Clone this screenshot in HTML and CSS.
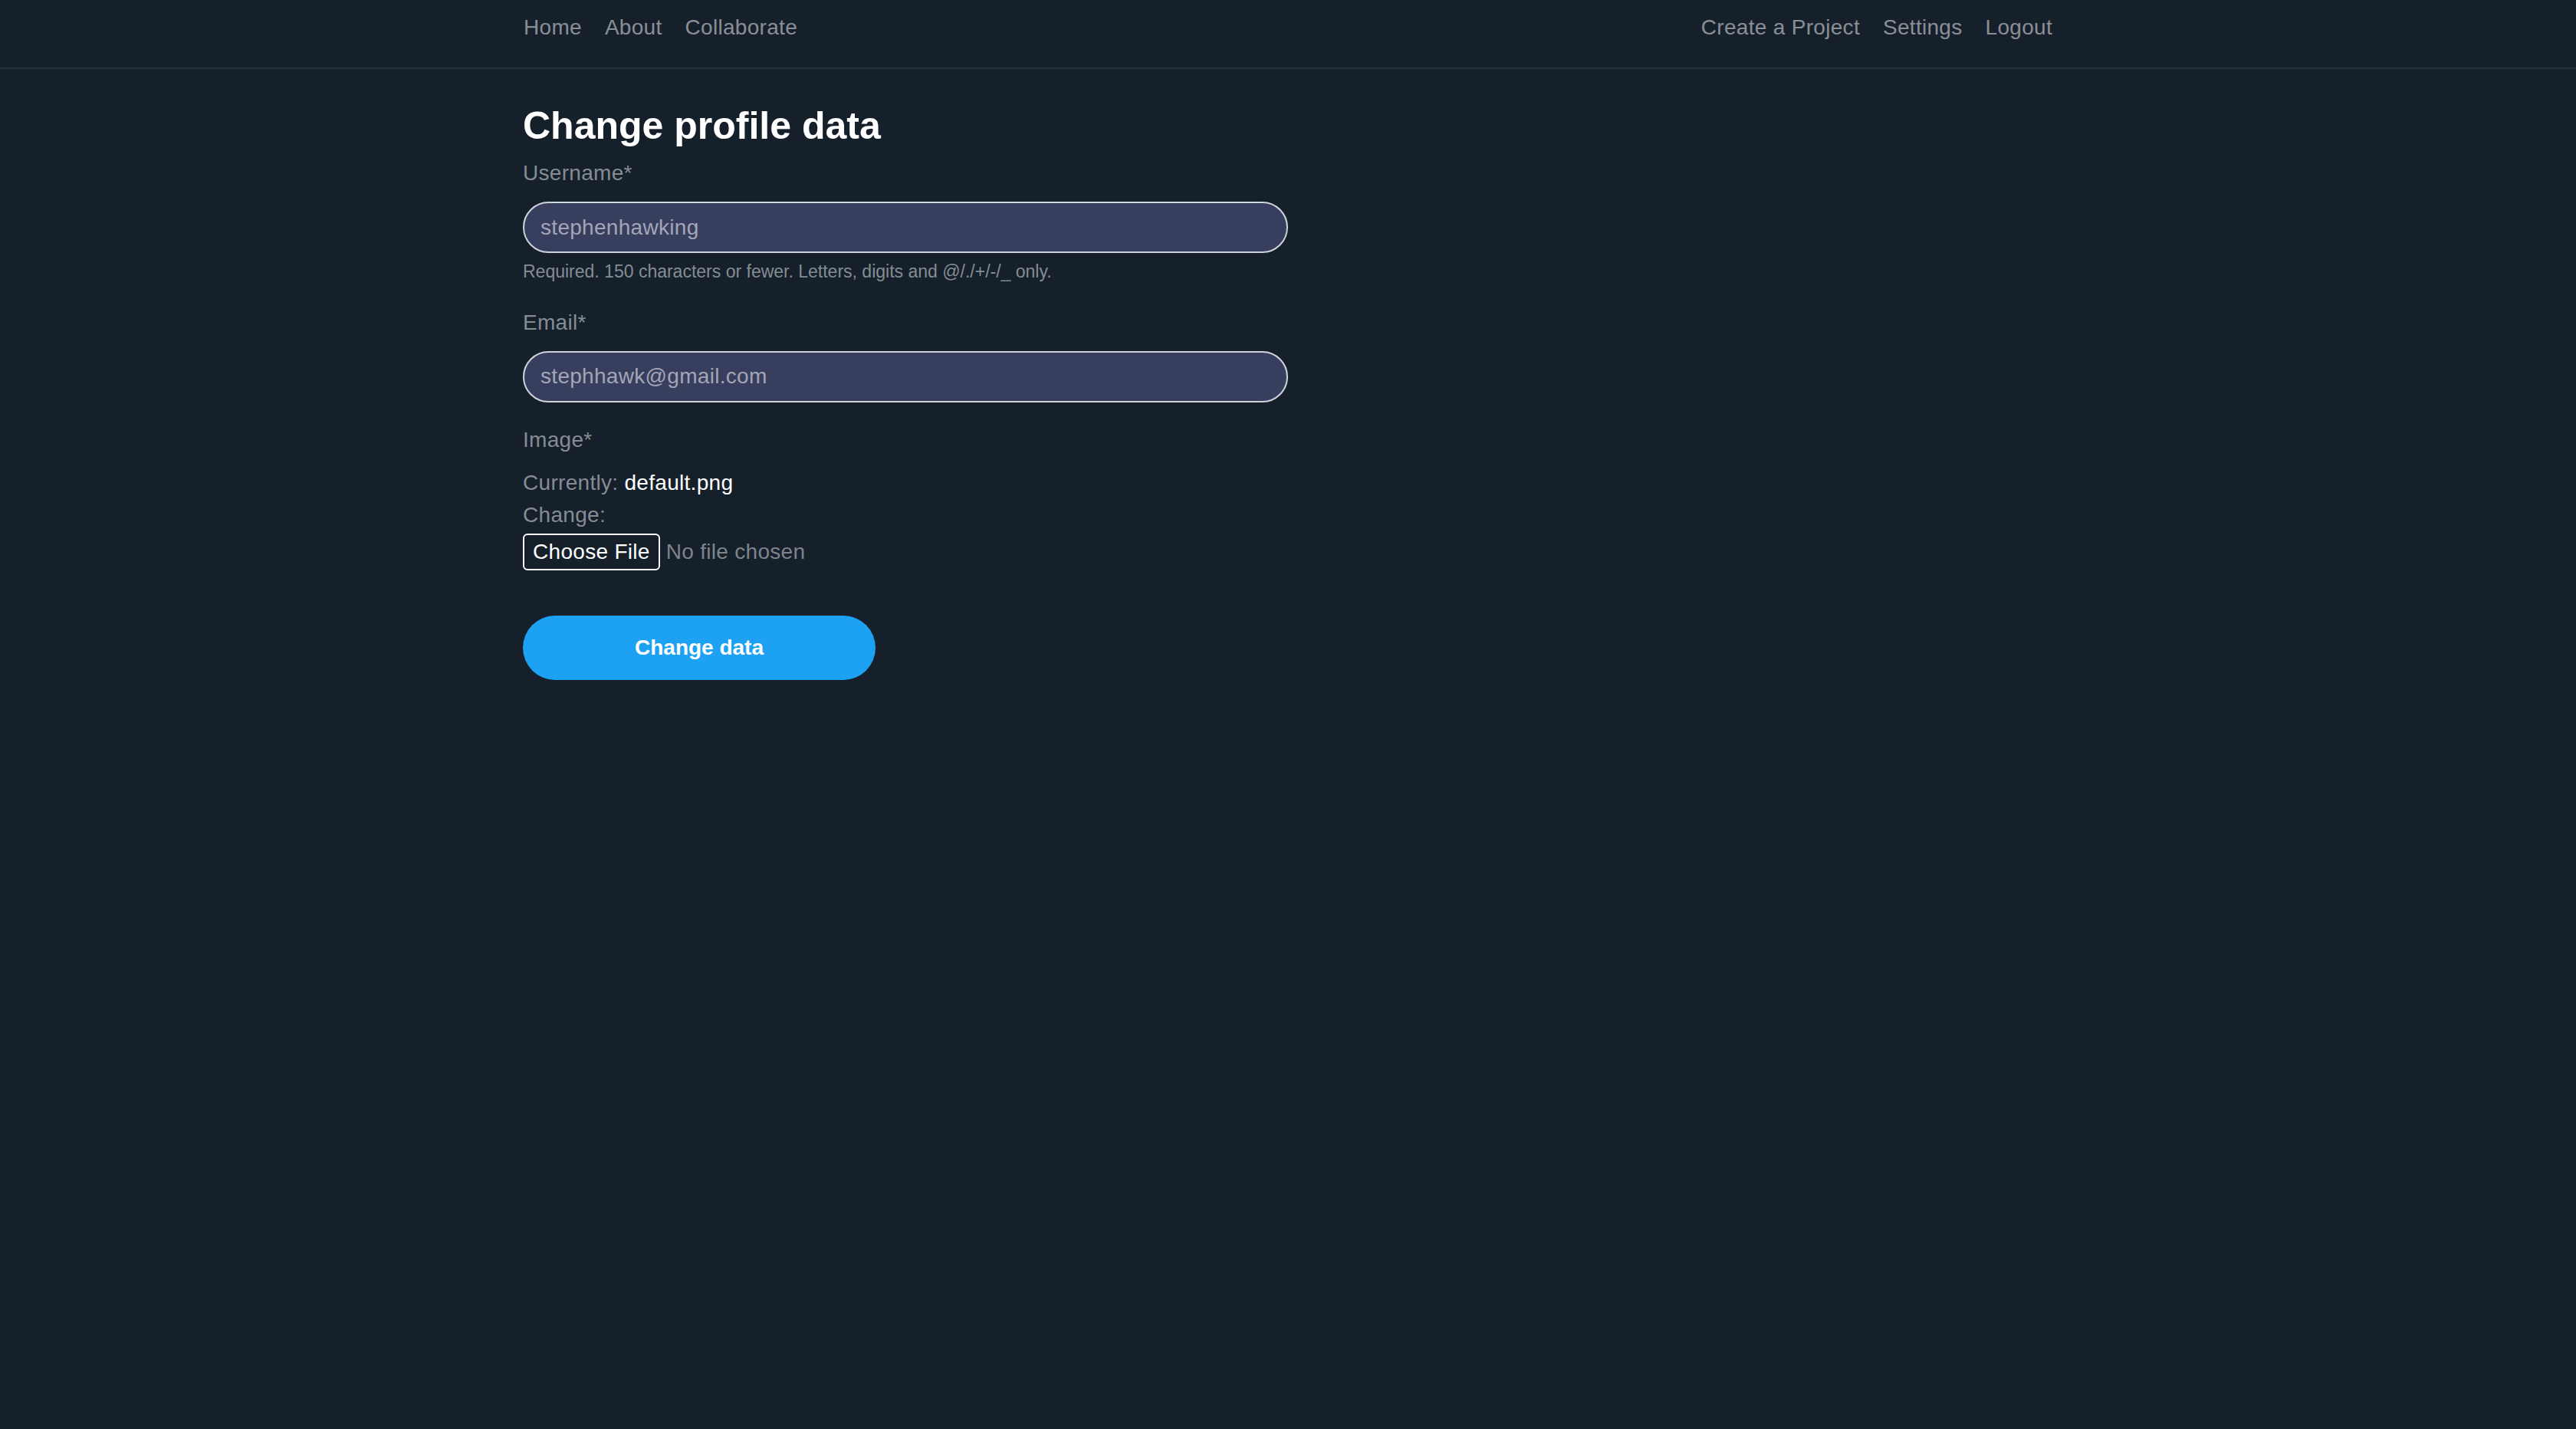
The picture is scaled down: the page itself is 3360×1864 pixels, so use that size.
FILE: index.html
```html
<!DOCTYPE html>
<html lang="en">
<head>
<meta charset="utf-8">
<title>Change profile data</title>
<link rel="stylesheet" href="styles.css">
</head>
<body>
<nav class="navbar">
  <div class="nav-inner">
    <ul class="nav-list">
      <li><a class="nav-link" href="#">Home</a></li>
      <li><a class="nav-link" href="#">About</a></li>
      <li><a class="nav-link" href="#">Collaborate</a></li>
    </ul>
    <ul class="nav-list">
      <li><a class="nav-link" href="#">Create a Project</a></li>
      <li><a class="nav-link" href="#">Settings</a></li>
      <li><a class="nav-link" href="#">Logout</a></li>
    </ul>
  </div>
</nav>
<main class="container">
  <form class="profile-form">
    <h1 class="title">Change profile data</h1>
    <div class="field">
      <label class="field-label" for="username">Username*</label>
      <input class="field-input" id="username" type="text" value="stephenhawking">
      <small class="help">Required. 150 characters or fewer. Letters, digits and @/./+/-/_ only.</small>
    </div>
    <div class="field">
      <label class="field-label" for="email">Email*</label>
      <input class="field-input" id="email" type="email" value="stephhawk@gmail.com">
    </div>
    <div class="field field--last">
      <label class="field-label field-label--tight">Image*</label>
      <div class="text-line">Currently: <a class="current-link" href="#">default.png</a></div>
      <div class="text-line">Change:</div>
      <div class="file-row">
        <button type="button" class="file-btn">Choose File</button>
        <span class="file-none">No file chosen</span>
      </div>
    </div>
    <button type="submit" class="submit-btn">Change data</button>
  </form>
</main>
</body>
</html>
```

FILE: styles.css
```css
* {
  box-sizing: border-box;
}

html, body {
  margin: 0;
  padding: 0;
}

body {
  background: #15202b;
  font-family: "Liberation Sans", Arial, Helvetica, sans-serif;
  font-size: 28px;
  line-height: 42px;
  letter-spacing: 0.3px;
  color: #ffffff;
  min-height: 1864px;
}

.navbar {
  height: 90px;
  border-bottom: 2px solid #27323d;
}

.nav-inner {
  width: 2024px;
  margin: 0 auto;
  padding-top: 15px;
  display: flex;
  justify-content: space-between;
}

.nav-list {
  list-style: none;
  margin: 0;
  padding: 0;
  display: flex;
}

.nav-link {
  display: block;
  padding: 0 15px;
  line-height: 42px;
  color: rgba(255, 255, 255, 0.5);
  text-decoration: none;
}

.container {
  width: 2024px;
  margin: 0 auto;
  padding: 0 14px;
}

.profile-form {
  width: 998px;
}

.title {
  margin: 44px 0 11px;
  font-size: 50px;
  line-height: 60px;
  font-weight: 700;
  letter-spacing: 0;
  color: #ffffff;
}

.field {
  margin-bottom: 28px;
}

.field--last {
  margin-bottom: 0;
}

.field-label {
  display: block;
  margin-bottom: 16px;
  color: #858c94;
}

.field-label--tight {
  margin-bottom: 14px;
}

.field-input {
  display: block;
  width: 100%;
  height: 67px;
  padding: 0 21px;
  border: 2px solid #ced4da;
  border-radius: 34px;
  background: #383f5e;
  color: #a2a6b7;
  font-family: inherit;
  font-size: 28px;
  letter-spacing: 0.3px;
  outline: none;
}

.help {
  display: block;
  margin-top: 7px;
  font-size: 23px;
  line-height: 34.5px;
  letter-spacing: 0;
  color: #858c94;
}

.text-line {
  color: #858c94;
}

.current-link {
  color: #ffffff;
  text-decoration: none;
}

.file-row {
  margin-top: 3px;
  display: flex;
  align-items: center;
}

.file-btn {
  height: 48px;
  padding: 0 11px;
  border: 2px solid #ffffff;
  border-radius: 6px;
  background: transparent;
  color: #ffffff;
  font-family: inherit;
  font-size: 28px;
  line-height: 32px;
  letter-spacing: 0.3px;
}

.file-none {
  margin-left: 8px;
  color: #7d848c;
}

.submit-btn {
  display: block;
  margin-top: 59px;
  width: 460px;
  height: 84px;
  border: none;
  border-radius: 42px;
  background: #1da1f2;
  color: #ffffff;
  font-family: inherit;
  font-size: 28px;
  font-weight: 700;
  letter-spacing: 0;
}
```
